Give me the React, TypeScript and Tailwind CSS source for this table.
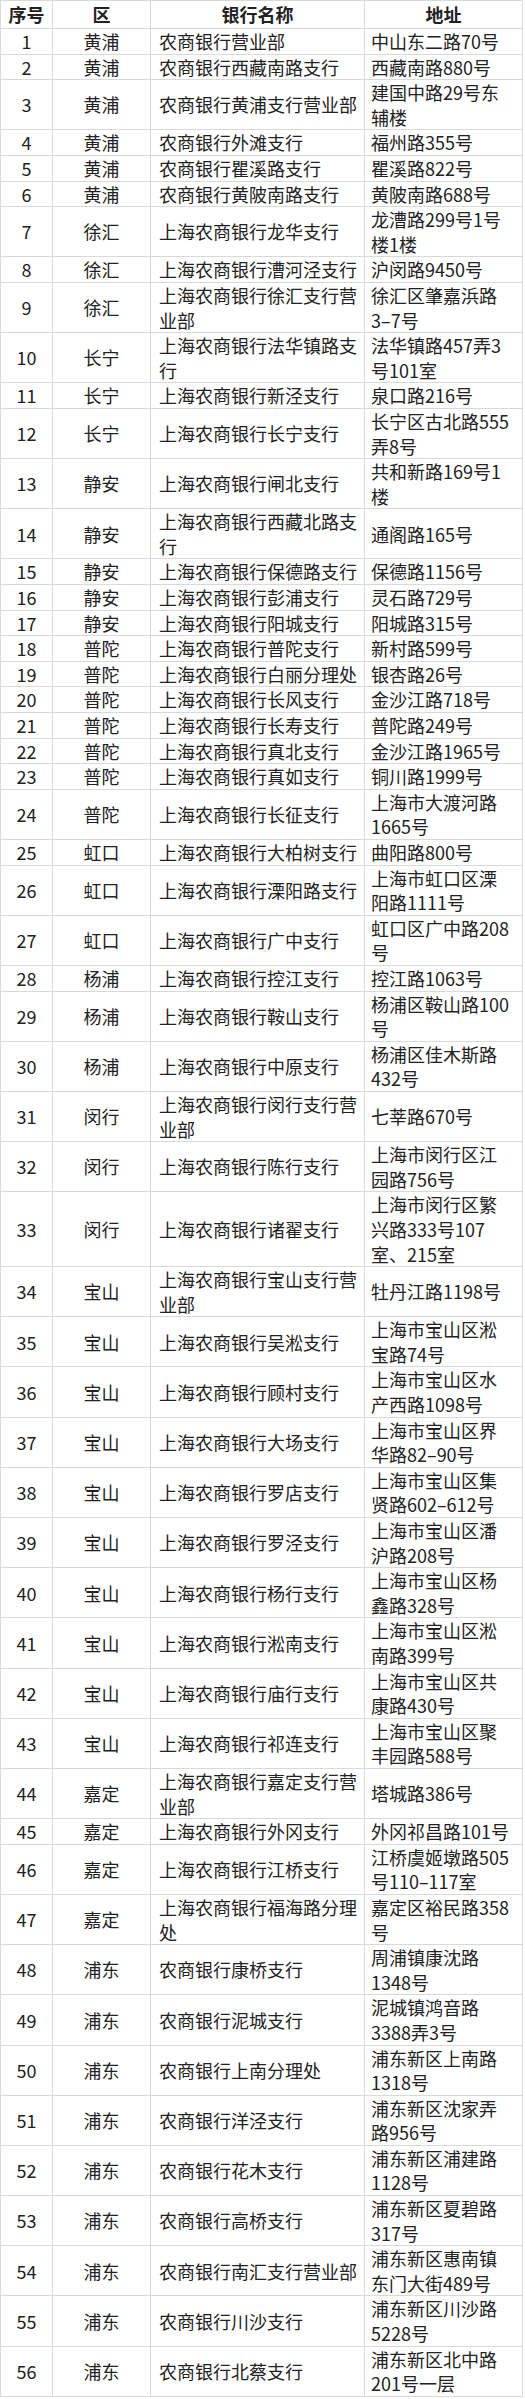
import React from "react";

type Row = [number, string, string[], string[]];

const rows: Row[] = [
  [1, "黄浦", ["农商银行营业部"], ["中山东二路70号"]],
  [2, "黄浦", ["农商银行西藏南路支行"], ["西藏南路880号"]],
  [3, "黄浦", ["农商银行黄浦支行营业部"], ["建国中路29号东", "辅楼"]],
  [4, "黄浦", ["农商银行外滩支行"], ["福州路355号"]],
  [5, "黄浦", ["农商银行瞿溪路支行"], ["瞿溪路822号"]],
  [6, "黄浦", ["农商银行黄陂南路支行"], ["黄陂南路688号"]],
  [7, "徐汇", ["上海农商银行龙华支行"], ["龙漕路299号1号", "楼1楼"]],
  [8, "徐汇", ["上海农商银行漕河泾支行"], ["沪闵路9450号"]],
  [9, "徐汇", ["上海农商银行徐汇支行营", "业部"], ["徐汇区肇嘉浜路", "3–7号"]],
  [10, "长宁", ["上海农商银行法华镇路支", "行"], ["法华镇路457弄3", "号101室"]],
  [11, "长宁", ["上海农商银行新泾支行"], ["泉口路216号"]],
  [12, "长宁", ["上海农商银行长宁支行"], ["长宁区古北路555", "弄8号"]],
  [13, "静安", ["上海农商银行闸北支行"], ["共和新路169号1", "楼"]],
  [14, "静安", ["上海农商银行西藏北路支", "行"], ["通阁路165号"]],
  [15, "静安", ["上海农商银行保德路支行"], ["保德路1156号"]],
  [16, "静安", ["上海农商银行彭浦支行"], ["灵石路729号"]],
  [17, "静安", ["上海农商银行阳城支行"], ["阳城路315号"]],
  [18, "普陀", ["上海农商银行普陀支行"], ["新村路599号"]],
  [19, "普陀", ["上海农商银行白丽分理处"], ["银杏路26号"]],
  [20, "普陀", ["上海农商银行长风支行"], ["金沙江路718号"]],
  [21, "普陀", ["上海农商银行长寿支行"], ["普陀路249号"]],
  [22, "普陀", ["上海农商银行真北支行"], ["金沙江路1965号"]],
  [23, "普陀", ["上海农商银行真如支行"], ["铜川路1999号"]],
  [24, "普陀", ["上海农商银行长征支行"], ["上海市大渡河路", "1665号"]],
  [25, "虹口", ["上海农商银行大柏树支行"], ["曲阳路800号"]],
  [26, "虹口", ["上海农商银行溧阳路支行"], ["上海市虹口区溧", "阳路1111号"]],
  [27, "虹口", ["上海农商银行广中支行"], ["虹口区广中路208", "号"]],
  [28, "杨浦", ["上海农商银行控江支行"], ["控江路1063号"]],
  [29, "杨浦", ["上海农商银行鞍山支行"], ["杨浦区鞍山路100", "号"]],
  [30, "杨浦", ["上海农商银行中原支行"], ["杨浦区佳木斯路", "432号"]],
  [31, "闵行", ["上海农商银行闵行支行营", "业部"], ["七莘路670号"]],
  [32, "闵行", ["上海农商银行陈行支行"], ["上海市闵行区江", "园路756号"]],
  [33, "闵行", ["上海农商银行诸翟支行"], ["上海市闵行区繁", "兴路333号107", "室、215室"]],
  [34, "宝山", ["上海农商银行宝山支行营", "业部"], ["牡丹江路1198号"]],
  [35, "宝山", ["上海农商银行吴淞支行"], ["上海市宝山区淞", "宝路74号"]],
  [36, "宝山", ["上海农商银行顾村支行"], ["上海市宝山区水", "产西路1098号"]],
  [37, "宝山", ["上海农商银行大场支行"], ["上海市宝山区界", "华路82–90号"]],
  [38, "宝山", ["上海农商银行罗店支行"], ["上海市宝山区集", "贤路602–612号"]],
  [39, "宝山", ["上海农商银行罗泾支行"], ["上海市宝山区潘", "沪路208号"]],
  [40, "宝山", ["上海农商银行杨行支行"], ["上海市宝山区杨", "鑫路328号"]],
  [41, "宝山", ["上海农商银行淞南支行"], ["上海市宝山区淞", "南路399号"]],
  [42, "宝山", ["上海农商银行庙行支行"], ["上海市宝山区共", "康路430号"]],
  [43, "宝山", ["上海农商银行祁连支行"], ["上海市宝山区聚", "丰园路588号"]],
  [44, "嘉定", ["上海农商银行嘉定支行营", "业部"], ["塔城路386号"]],
  [45, "嘉定", ["上海农商银行外冈支行"], ["外冈祁昌路101号"]],
  [46, "嘉定", ["上海农商银行江桥支行"], ["江桥虞姬墩路505", "号110–117室"]],
  [47, "嘉定", ["上海农商银行福海路分理", "处"], ["嘉定区裕民路358", "号"]],
  [48, "浦东", ["农商银行康桥支行"], ["周浦镇康沈路", "1348号"]],
  [49, "浦东", ["农商银行泥城支行"], ["泥城镇鸿音路", "3388弄3号"]],
  [50, "浦东", ["农商银行上南分理处"], ["浦东新区上南路", "1318号"]],
  [51, "浦东", ["农商银行洋泾支行"], ["浦东新区沈家弄", "路956号"]],
  [52, "浦东", ["农商银行花木支行"], ["浦东新区浦建路", "1128号"]],
  [53, "浦东", ["农商银行高桥支行"], ["浦东新区夏碧路", "317号"]],
  [54, "浦东", ["农商银行南汇支行营业部"], ["浦东新区惠南镇", "东门大街489号"]],
  [55, "浦东", ["农商银行川沙支行"], ["浦东新区川沙路", "5228号"]],
  [56, "浦东", ["农商银行北蔡支行"], ["浦东新区北中路", "201号一层"]],
];

const cell = "border-r border-b border-[#d9d9d9] flex items-center leading-[24.6px]";

export default function App() {
  return (
    <div className="bg-white w-[525px] min-h-[2399px] font-['Noto_Sans_CJK_SC','Noto_Sans',sans-serif] text-[18px] text-[#222]">
      <div className="grid grid-cols-[52px_98px_214px_158px] w-[522px] border-l border-t border-[#d9d9d9]">
        <div className={`${cell} justify-center font-bold leading-[27px]`}>序号</div>
        <div className={`${cell} justify-center font-bold leading-[27px]`}>区</div>
        <div className={`${cell} justify-center font-bold leading-[27px]`}>银行名称</div>
        <div className={`${cell} justify-center font-bold leading-[27px]`}>地址</div>
        {rows.map(([n, d, name, addr]) => (
          <React.Fragment key={n}>
            <div className={`${cell} justify-center`}>{n}</div>
            <div className={`${cell} justify-center`}>{d}</div>
            <div className={`${cell} pl-2`}>
              <div>
                {name.map((l, i) => (
                  <div key={i} className="whitespace-nowrap">{l}</div>
                ))}
              </div>
            </div>
            <div className={`${cell} pl-[6px]`}>
              <div>
                {addr.map((l, i) => (
                  <div key={i} className="whitespace-nowrap">{l}</div>
                ))}
              </div>
            </div>
          </React.Fragment>
        ))}
      </div>
    </div>
  );
}
